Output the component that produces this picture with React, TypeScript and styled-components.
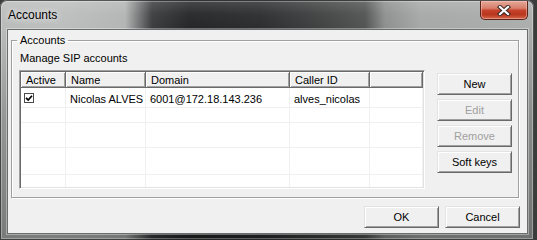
import React from 'react';
import styled, { createGlobalStyle } from 'styled-components';

type Account = {
  active: boolean;
  name: string;
  domain: string;
  callerId: string;
};

const accounts: Account[] = [
  { active: true, name: 'Nicolas ALVES', domain: '6001@172.18.143.236', callerId: 'alves_nicolas' },
];

const columns = ['Active', 'Name', 'Domain', 'Caller ID', ''];
// the list in the screenshot has uneven row heights, keep them as measured
const rowHeights = [20, 15, 25, 27];

const actions = [
  { label: 'New', disabled: false },
  { label: 'Edit', disabled: true },
  { label: 'Remove', disabled: true },
  { label: 'Soft keys', disabled: false },
];

const GlobalStyle = createGlobalStyle`
  html, body {
    margin: 0;
    padding: 0;
    background: #3a3b3c;
  }
  body {
    width: 537px;
    height: 240px;
    overflow: hidden;
    font-family: 'Liberation Sans', Arial, sans-serif;
    font-size: 11px;
    color: #000;
  }
`;

export default function App() {
  return (
    <>
      <GlobalStyle />
      <Window>
        <TitleBar>
          <Title>Accounts</Title>
          <CloseButton aria-label='Close'>
            <svg width='14' height='11' viewBox='0 0 14 11'>
              <path d='M3 2 L11 9 M11 2 L3 9' stroke='#3b2a28' strokeWidth='4.2' strokeLinecap='square' fill='none' />
              <path d='M3 2 L11 9 M11 2 L3 9' stroke='#ffffff' strokeWidth='2.2' strokeLinecap='square' fill='none' />
            </svg>
          </CloseButton>
        </TitleBar>
        <Client>
          <GroupBox>
            <Legend>Accounts</Legend>
            <Caption>Manage SIP accounts</Caption>
            <GroupBody>
              <ListView>
                <HeaderRow>
                  {columns.map((col, i) => (
                    <HeaderCell key={i}>{col}</HeaderCell>
                  ))}
                </HeaderRow>
                {rowHeights.map((h, i) => {
                  const acc = accounts[i];
                  return (
                    <Row key={i} $h={h}>
                      <Cell>
                        {acc && (
                          <CheckBox>
                            {acc.active && (
                              <svg width='8' height='8' viewBox='0 0 8 8'>
                                <path d='M1 3.8 L3.2 6 L7 1.8' stroke='#000' strokeWidth='1.7' fill='none' />
                              </svg>
                            )}
                          </CheckBox>
                        )}
                      </Cell>
                      <TextCell>{acc?.name}</TextCell>
                      <TextCell>{acc?.domain}</TextCell>
                      <TextCell>{acc?.callerId}</TextCell>
                      <TextCell />
                    </Row>
                  );
                })}
                <Row $h={0} $fill>
                  {columns.map((_, i) => (
                    <Cell key={i} $noBottom />
                  ))}
                </Row>
              </ListView>
              <ButtonColumn>
                {actions.map(a => (
                  <Button key={a.label} disabled={a.disabled}>
                    {a.label}
                  </Button>
                ))}
              </ButtonColumn>
            </GroupBody>
          </GroupBox>
          <Footer>
            <Button>OK</Button>
            <Button>Cancel</Button>
          </Footer>
        </Client>
      </Window>
    </>
  );
}

const Window = styled.div`
  box-sizing: border-box;
  width: 534px;
  height: 240px;
  padding: 0 6px 6px 7px;
  display: flex;
  flex-direction: column;
  border-radius: 7px 7px 0 0;
  background:
    linear-gradient(180deg, rgba(255, 255, 255, 0.16) 0, rgba(255, 255, 255, 0.04) 14px, rgba(0, 0, 0, 0) 29px, rgba(0, 0, 0, 0.2) 120px, rgba(0, 0, 0, 0.35) 240px),
    linear-gradient(
      90deg,
      #b9baba 0,
      #bdbebe 60px,
      #b3b4b4 125px,
      #3b3d3e 152px,
      #242627 190px,
      #2b2d2e 260px,
      #444646 330px,
      #525454 365px,
      #8e8f8f 385px,
      #a6a7a7 420px,
      #acadad 534px
    );
  box-shadow: inset 0 0 0 1px rgba(0, 0, 0, 0.6), inset 0 0 0 2px rgba(255, 255, 255, 0.3);
`;

const TitleBar = styled.div`
  display: flex;
  align-items: flex-start;
  height: 29px;
  flex: none;
`;

const Title = styled.div`
  margin: 8px 0 0 1px;
  font-size: 12px;
  line-height: 15px;
  color: #000;
  text-shadow: 0 0 6px rgba(255, 255, 255, 0.9), 0 0 10px rgba(255, 255, 255, 0.6);
`;

const CloseButton = styled.div`
  box-sizing: border-box;
  margin: 1px 0 0 auto;
  width: 48px;
  height: 19px;
  display: flex;
  align-items: center;
  justify-content: center;
  border: 1px solid #5a241b;
  border-top: none;
  border-radius: 0 0 5px 5px;
  background: linear-gradient(180deg, #e4a898 0, #d77f6c 40%, #c5422b 52%, #b9361f 75%, #d4664a 100%);
  box-shadow: inset 0 0 0 1px rgba(255, 210, 200, 0.45);
`;

const Client = styled.div`
  display: flex;
  flex-direction: column;
  padding: 4px 8px 5px 3px;
  height: 203px;
  background: #f0f0f0;
  border: 1px solid #6b6c6d;
  box-shadow: 0 0 0 1px rgba(255, 255, 255, 0.35);
`;

const GroupBox = styled.fieldset`
  margin: 0;
  min-width: 0;
  padding: 5px 6px 8px 7px;
  border: 1px solid #a0a0a0;
  box-shadow: 1px 1px 0 #fff, inset 1px 1px 0 #fff;
`;

const Legend = styled.legend`
  margin-left: -2px;
  padding: 0 3px;
  line-height: 13px;
  font-size: 11px;
`;

const Caption = styled.div`
  margin-left: 1px;
  line-height: 13px;
`;

const GroupBody = styled.div`
  display: flex;
  gap: 12px;
  margin-top: 5px;
`;

const ListView = styled.div`
  box-sizing: border-box;
  width: 406px;
  height: 119px;
  padding: 1px;
  display: flex;
  flex-direction: column;
  background: #fff;
  border: 1px solid;
  border-color: #a0a0a0 #fff #fff #a0a0a0;
  box-shadow: inset 1px 1px 0 #696969, inset -1px -1px 0 #e3e3e3;
`;

const gridColumns = '45px 80px 144px 80px 1fr';

const HeaderRow = styled.div`
  display: grid;
  grid-template-columns: ${gridColumns};
  height: 16px;
  flex: none;
`;

const HeaderCell = styled.div`
  box-sizing: border-box;
  padding: 2px 0 0 5px;
  line-height: 12px;
  background: #f0f0f0;
  border-right: 1px solid #696969;
  border-bottom: 1px solid #696969;
  box-shadow: inset 1px 1px 0 #fff, inset -1px -1px 0 #a0a0a0;
  white-space: nowrap;
  overflow: hidden;
`;

const Row = styled.div<{ $h: number; $fill?: boolean }>`
  display: grid;
  grid-template-columns: ${gridColumns};
  height: ${p => (p.$fill ? 'auto' : `${p.$h}px`)};
  flex: ${p => (p.$fill ? '1' : 'none')};
`;

const Cell = styled.div<{ $noBottom?: boolean }>`
  box-sizing: border-box;
  display: flex;
  align-items: center;
  padding: 1px 0 0 3px;
  border-right: 1px solid #f0f0f0;
  border-bottom: ${p => (p.$noBottom ? 'none' : '1px solid #f0f0f0')};
  white-space: nowrap;
  overflow: hidden;
`;

const TextCell = styled(Cell)`
  padding: 3px 0 0 4px;
`;

const CheckBox = styled.span`
  box-sizing: border-box;
  width: 10px;
  height: 10px;
  display: flex;
  align-items: center;
  justify-content: center;
  background: #fff;
  border: 1px solid #4a4a4a;
`;

const ButtonColumn = styled.div`
  display: flex;
  flex-direction: column;
  gap: 4px;
  margin-top: 3px;
`;

const Button = styled.button`
  box-sizing: border-box;
  width: 75px;
  height: 22px;
  padding: 0;
  margin: 0;
  font-family: 'Liberation Sans', Arial, sans-serif;
  font-size: 11px;
  color: #000;
  background: #f0f0f0;
  border: 1px solid;
  border-color: #e3e3e3 #696969 #696969 #e3e3e3;
  box-shadow: inset 1px 1px 0 #fff, inset -1px -1px 0 #a0a0a0;
  border-radius: 0;

  &:disabled {
    color: #a0a0a0;
  }
`;

const Footer = styled.div`
  display: flex;
  justify-content: flex-end;
  gap: 6px;
  margin: 8px -1px 0 0;
`;
